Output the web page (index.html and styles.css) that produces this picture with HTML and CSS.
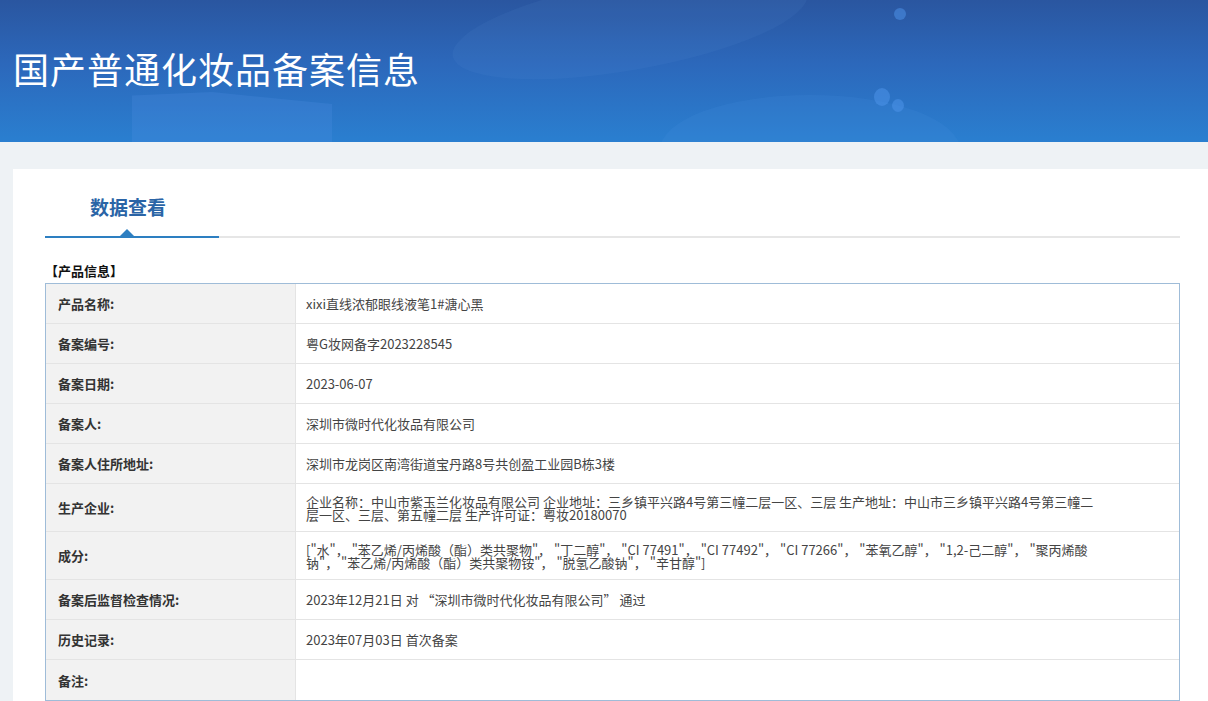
FILE: index.html
```html
<!DOCTYPE html>
<html lang="zh-CN">
<head>
<meta charset="utf-8">
<title>国产普通化妆品备案信息</title>
<link rel="stylesheet" href="styles.css">
</head>
<body>
<header class="banner">
  <span class="deco deco-wave"></span>
  <span class="deco deco-block"></span>
  <span class="deco deco-hill"></span>
  <span class="deco dot dot1"></span>
  <span class="deco dot dot2"></span>
  <span class="deco dot dot3"></span>
  <h1 class="banner-title">国产普通化妆品备案信息</h1>
</header>
<main class="page">
  <section class="card">
    <nav class="tabs">
      <div class="tab active">数据查看<span class="tab-arrow"></span></div>
    </nav>
    <h2 class="section-title">【产品信息】</h2>
    <table class="info">
      <colgroup><col class="col-label"><col></colgroup>
      <tbody>
        <tr><th>产品名称:</th><td>xixi直线浓郁眼线液笔1#溏心黑</td></tr>
        <tr><th>备案编号:</th><td>粤G妆网备字2023228545</td></tr>
        <tr><th>备案日期:</th><td>2023-06-07</td></tr>
        <tr><th>备案人:</th><td>深圳市微时代化妆品有限公司</td></tr>
        <tr><th>备案人住所地址:</th><td>深圳市龙岗区南湾街道宝丹路8号共创盈工业园B栋3楼</td></tr>
        <tr class="tall"><th>生产企业:</th><td>企业名称：中山市紫玉兰化妆品有限公司 企业地址：三乡镇平兴路4号第三幢二层一区、三层 生产地址：中山市三乡镇平兴路4号第三幢二层一区、三层、第五幢二层 生产许可证：粤妆20180070</td></tr>
        <tr class="tall"><th>成分:</th><td>["水"， "苯乙烯/丙烯酸（酯）类共聚物"， "丁二醇"， "CI 77491"， "CI 77492"， "CI 77266"， "苯氧乙醇"， "1,2-己二醇"， "聚丙烯酸钠"， "苯乙烯/丙烯酸（酯）类共聚物铵"， "脱氢乙酸钠"， "辛甘醇"]</td></tr>
        <tr><th>备案后监督检查情况:</th><td>2023年12月21日 对 “深圳市微时代化妆品有限公司” 通过</td></tr>
        <tr><th>历史记录:</th><td>2023年07月03日 首次备案</td></tr>
        <tr class="last"><th>备注:</th><td></td></tr>
      </tbody>
    </table>
  </section>
</main>
</body>
</html>
```

FILE: styles.css
```css
html, body {
  margin: 0;
  padding: 0;
}
body {
  background: #eef2f5;
  font-family: "Microsoft YaHei", "Noto Sans CJK SC", "Noto Sans", sans-serif;
  color: #333;
}

.banner {
  position: relative;
  height: 142px;
  overflow: hidden;
  background: linear-gradient(180deg, #2a56a0 0%, #2c68bb 45%, #2a7fd0 100%);
}
.banner-title {
  position: relative;
  margin: 0;
  padding: 46px 0 0 13px;
  font-size: 36px;
  line-height: 44px;
  font-weight: 400;
  color: #fff;
  letter-spacing: 1px;
}
.deco {
  position: absolute;
  display: block;
}
.deco-wave {
  left: 450px;
  top: -20px;
  width: 360px;
  height: 90px;
  border-radius: 50%;
  background: rgba(120, 170, 230, 0.08);
  transform: rotate(-10deg);
}
.deco-block {
  left: 132px;
  top: 92px;
  width: 200px;
  height: 60px;
  background: rgba(90, 150, 235, 0.2);
  clip-path: polygon(0 6%, 40% 0, 100% 20%, 100% 100%, 0 100%);
}
.deco-hill {
  left: 660px;
  top: 95px;
  width: 300px;
  height: 110px;
  border-radius: 50%;
  background: rgba(80, 150, 230, 0.14);
}
.dot {
  border-radius: 50%;
  background: rgba(80, 150, 235, 0.5);
}
.dot1 { left: 894px; top: 8px; width: 12px; height: 12px; }
.dot2 { left: 874px; top: 88px; width: 16px; height: 18px; }
.dot3 { left: 892px; top: 99px; width: 12px; height: 13px; }

.page {
  padding: 27px 0 0 13px;
}
.card {
  background: #fff;
  padding: 24px 28px 0 32px;
  min-height: 520px;
}

.tabs {
  display: flex;
  border-bottom: 2px solid #e6e6e6;
}
.tab {
  position: relative;
  width: 174px;
  text-align: center;
  font-size: 19px;
  line-height: 28px;
  font-weight: 700;
  color: #2a64a6;
  padding-bottom: 15px;
  margin-bottom: -2px;
  border-bottom: 2px solid #2d7fc1;
  text-indent: -8px;
}
.tab-arrow {
  position: absolute;
  left: 75px;
  bottom: 0;
  width: 0;
  height: 0;
  border-left: 7px solid transparent;
  border-right: 7px solid transparent;
  border-bottom: 7px solid #2d7fc1;
}

.section-title {
  margin: 0;
  padding: 24px 0 3px;
  font-size: 13px;
  line-height: 18px;
  font-weight: 700;
  color: #111;
}

.info {
  width: 100%;
  table-layout: fixed;
  border-collapse: separate;
  border-spacing: 0;
  border: 1px solid #9fbcd8;
  font-size: 13px;
}
.col-label {
  width: 250px;
}
.info th,
.info td {
  height: 39px;
  padding: 0;
  border-bottom: 1px solid #e4e4e4;
  vertical-align: middle;
}
.info tr.last th,
.info tr.last td {
  border-bottom: none;
  height: 40px;
}
.info th {
  padding-left: 12px;
  background: #f2f2f2;
  border-right: 1px solid #e4e4e4;
  text-align: left;
  font-weight: 700;
  color: #333;
}
.info td {
  padding: 0 76px 0 10px;
  color: #444;
  line-height: 13px;
}
.info tr.tall th,
.info tr.tall td {
  height: 47px;
}
```
